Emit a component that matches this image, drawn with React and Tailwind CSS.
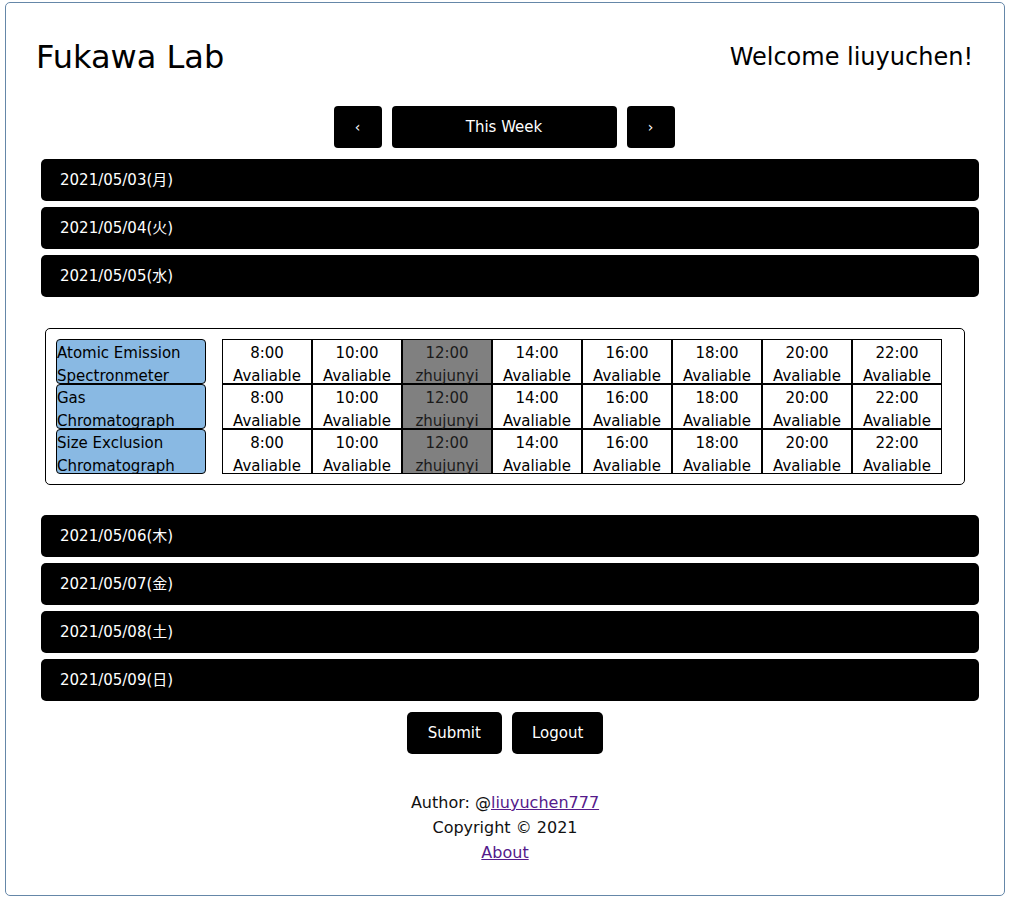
import React from "react";

const days1 = ["2021/05/03(月)", "2021/05/04(火)", "2021/05/05(水)"];
const days2 = ["2021/05/06(木)", "2021/05/07(金)", "2021/05/08(土)", "2021/05/09(日)"];
const machines = [
  ["Atomic Emission", "Spectronmeter"],
  ["Gas", "Chromatograph"],
  ["Size Exclusion", "Chromatograph"],
];
const times = ["8:00", "10:00", "12:00", "14:00", "16:00", "18:00", "20:00", "22:00"];

function DayBar({ label }) {
  return (
    <div className="h-[42px] w-[938px] bg-black rounded-[5px] flex items-center pl-[19px] pt-[1px] text-white text-[15px]">
      {label}
    </div>
  );
}

export default function App() {
  return (
    <div
      className="bg-white"
      style={{ fontFamily: '"DejaVu Sans", "Noto Sans CJK JP", sans-serif' }}
    >
      <div className="ml-[5px] mt-[2px] w-[1000px] h-[894px] border border-[#6587a8] rounded-[5px] flex flex-col">
        <div className="pt-[24px] h-[84px] pl-[30px] pr-[31px] flex items-center justify-between">
          <div className="text-[32px] text-black">Fukawa Lab</div>
          <div className="text-[24px] text-black">Welcome liuyuchen!</div>
        </div>
        <div className="mt-[19px] flex justify-center gap-[10px] -translate-x-[1px]">
          <button className="w-[48px] h-[42px] bg-black text-white rounded-[4px] text-[14px] pt-[1px]">&lsaquo;</button>
          <button className="w-[225px] h-[42px] bg-black text-white rounded-[4px] text-[15px] pt-[1px]">This Week</button>
          <button className="w-[48px] h-[42px] bg-black text-white rounded-[4px] text-[14px] pt-[1px]">&rsaquo;</button>
        </div>
        <div className="mt-[11px] ml-[35px] flex flex-col gap-[6px]">
          {days1.map((d) => (
            <DayBar key={d} label={d} />
          ))}
        </div>
        <div className="mt-[31px] ml-[39px] w-[920px] border border-black rounded-[5px] p-[10px]">
          {machines.map((m, i) => (
            <div key={i} className="flex">
              <div className="w-[150px] h-[45px] pt-[6px] bg-[#89b9e3] border border-black rounded-[4px] text-[15px] leading-[22.5px] text-black flex flex-col justify-center">
                <span>{m[0]}</span>
                <span>{m[1]}</span>
              </div>
              <div className="w-[16px]" />
              {times.map((t) => {
                const busy = t === "12:00";
                return (
                  <div
                    key={t}
                    className={
                      busy
                        ? "w-[90px] h-[45px] pt-[6px] border border-black bg-[#808080] text-[#1a1a1a] text-[15px] leading-[22.5px] flex flex-col items-center justify-center"
                        : "w-[90px] h-[45px] pt-[6px] border border-black bg-white text-black text-[15px] leading-[22.5px] flex flex-col items-center justify-center"
                    }
                  >
                    <span>{t}</span>
                    <span>{busy ? "zhujunyi" : "Avaliable"}</span>
                  </div>
                );
              })}
            </div>
          ))}
        </div>
        <div className="mt-[30px] ml-[35px] flex flex-col gap-[6px]">
          {days2.map((d) => (
            <DayBar key={d} label={d} />
          ))}
        </div>
        <div className="mt-[11px] flex justify-center gap-[10px]">
          <button className="h-[42px] px-[21px] pt-[1px] bg-black text-white rounded-[5px] text-[15px]">Submit</button>
          <button className="h-[42px] px-[20px] pt-[1px] bg-black text-white rounded-[5px] text-[15px]">Logout</button>
        </div>
        <div className="mt-[36px] flex flex-col items-center text-[16px] leading-[25px] text-[#111]">
          <div>
            Author: @<a className="underline text-[#551a8b]" href="#">liuyuchen777</a>
          </div>
          <div>Copyright © 2021</div>
          <a className="underline text-[#551a8b]" href="#">About</a>
        </div>
      </div>
    </div>
  );
}
